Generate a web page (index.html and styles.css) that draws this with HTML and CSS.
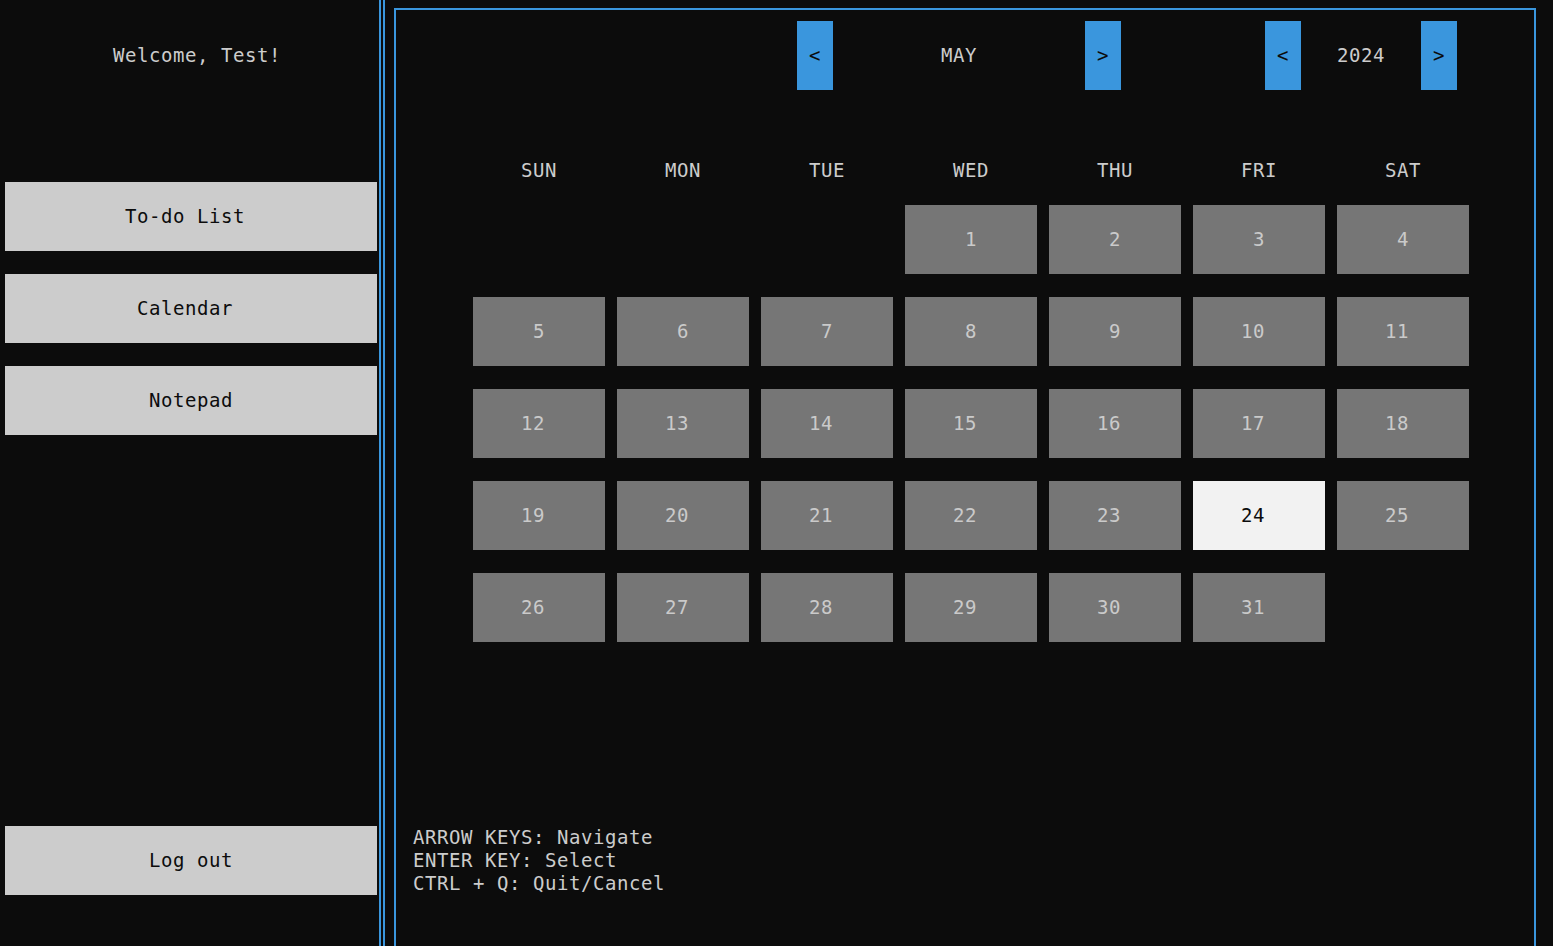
FILE: index.html
```html
<!DOCTYPE html>
<html lang="en">
<head>
<meta charset="utf-8">
<title>Calendar</title>
<link rel="stylesheet" href="styles.css">
</head>
<body>
<div class="app">
  <aside class="sidebar">
    <div class="welcome">Welcome, Test!</div>
    <nav class="menu">
      <div class="side-btn even">To-do List</div>
      <div class="side-btn even">Calendar</div>
      <div class="side-btn">Notepad</div>
    </nav>
    <div class="spacer"></div>
    <div class="side-btn">Log out</div>
  </aside>
  <main class="panel">
    <header class="cal-head">
      <div class="arrow">&lt;</div>
      <div class="month">MAY</div>
      <div class="arrow">&gt;</div>
      <div class="head-gap"></div>
      <div class="arrow">&lt;</div>
      <div class="year">2024</div>
      <div class="arrow">&gt;</div>
    </header>
    <div class="weekdays">
      <div>SUN</div><div>MON</div><div>TUE</div><div>WED</div><div>THU</div><div>FRI</div><div>SAT</div>
    </div>
    <div class="days">
      <div class="blank"></div><div class="blank"></div><div class="blank"></div>
      <div class="day">1</div><div class="day">2</div><div class="day">3</div><div class="day">4</div>
      <div class="day">5</div><div class="day">6</div><div class="day">7</div><div class="day">8</div><div class="day">9</div><div class="day dd">10</div><div class="day dd">11</div>
      <div class="day dd">12</div><div class="day dd">13</div><div class="day dd">14</div><div class="day dd">15</div><div class="day dd">16</div><div class="day dd">17</div><div class="day dd">18</div>
      <div class="day dd">19</div><div class="day dd">20</div><div class="day dd">21</div><div class="day dd">22</div><div class="day dd">23</div><div class="day dd today">24</div><div class="day dd">25</div>
      <div class="day dd">26</div><div class="day dd">27</div><div class="day dd">28</div><div class="day dd">29</div><div class="day dd">30</div><div class="day dd">31</div>
    </div>
    <div class="hints">
      <div class="hint">ARROW KEYS: Navigate</div>
      <div class="hint">ENTER KEY: Select</div>
      <div class="hint">CTRL + Q: Quit/Cancel</div>
    </div>
  </main>
</div>
</body>
</html>
```
FILE: styles.css
```css
* { box-sizing: border-box; }
html, body {
  margin: 0;
  padding: 0;
  background: #0c0c0c;
}
body {
  font-family: "DejaVu Sans Mono", "Liberation Mono", monospace;
  font-size: 19px;
  letter-spacing: 0.56px;
  line-height: 23px;
  color: #cccccc;
}
.app {
  display: flex;
  width: 1553px;
  height: 946px;
  overflow: hidden;
}
.sidebar {
  width: 385px;
  flex: none;
  border-right: 6px double #3a96dd;
  display: flex;
  flex-direction: column;
  padding: 44px 0 51px 0;
}
.welcome {
  height: 23px;
  padding-left: 113px;
  white-space: pre;
  color: #cccccc;
}
.menu {
  display: flex;
  flex-direction: column;
  gap: 23px;
  margin-top: 115px;
}
.spacer { flex: 1; }
.side-btn {
  margin-left: 5px;
  width: 372px;
  height: 69px;
  background: #cccccc;
  color: #0c0c0c;
  white-space: pre;
  display: flex;
  align-items: center;
  justify-content: center;
}
.side-btn.even { padding-right: 12px; }
.panel {
  flex: none;
  width: 1142px;
  height: 1000px;
  margin: 8px 0 0 9px;
  border: 2px solid #3a96dd;
  border-bottom: none;
  display: flex;
  flex-direction: column;
}
.cal-head {
  display: flex;
  height: 69px;
  margin-top: 11px;
  padding-left: 401px;
}
.arrow {
  width: 36px;
  height: 69px;
  background: #3a96dd;
  color: #0c0c0c;
  display: flex;
  align-items: center;
  justify-content: center;
}
.month, .year {
  height: 69px;
  display: flex;
  align-items: center;
  justify-content: center;
  color: #cccccc;
}
.month { width: 252px; }
.year { width: 120px; }
.head-gap { width: 144px; }
.weekdays, .days {
  display: grid;
  grid-template-columns: repeat(7, 132px);
  column-gap: 12px;
  padding-left: 77px;
}
.weekdays {
  margin-top: 69px;
  height: 23px;
}
.weekdays div { text-align: center; }
.days {
  margin-top: 23px;
  grid-auto-rows: 69px;
  row-gap: 23px;
}
.day {
  background: #767676;
  color: #cacaca;
  display: flex;
  align-items: center;
  justify-content: center;
}
.day.dd { padding-right: 12px; }
.day.today {
  background: #f2f2f2;
  color: #0c0c0c;
}
.hints {
  margin-top: 184px;
  padding-left: 17px;
  color: #cccccc;
}
.hint {
  height: 23px;
  white-space: pre;
}
```
